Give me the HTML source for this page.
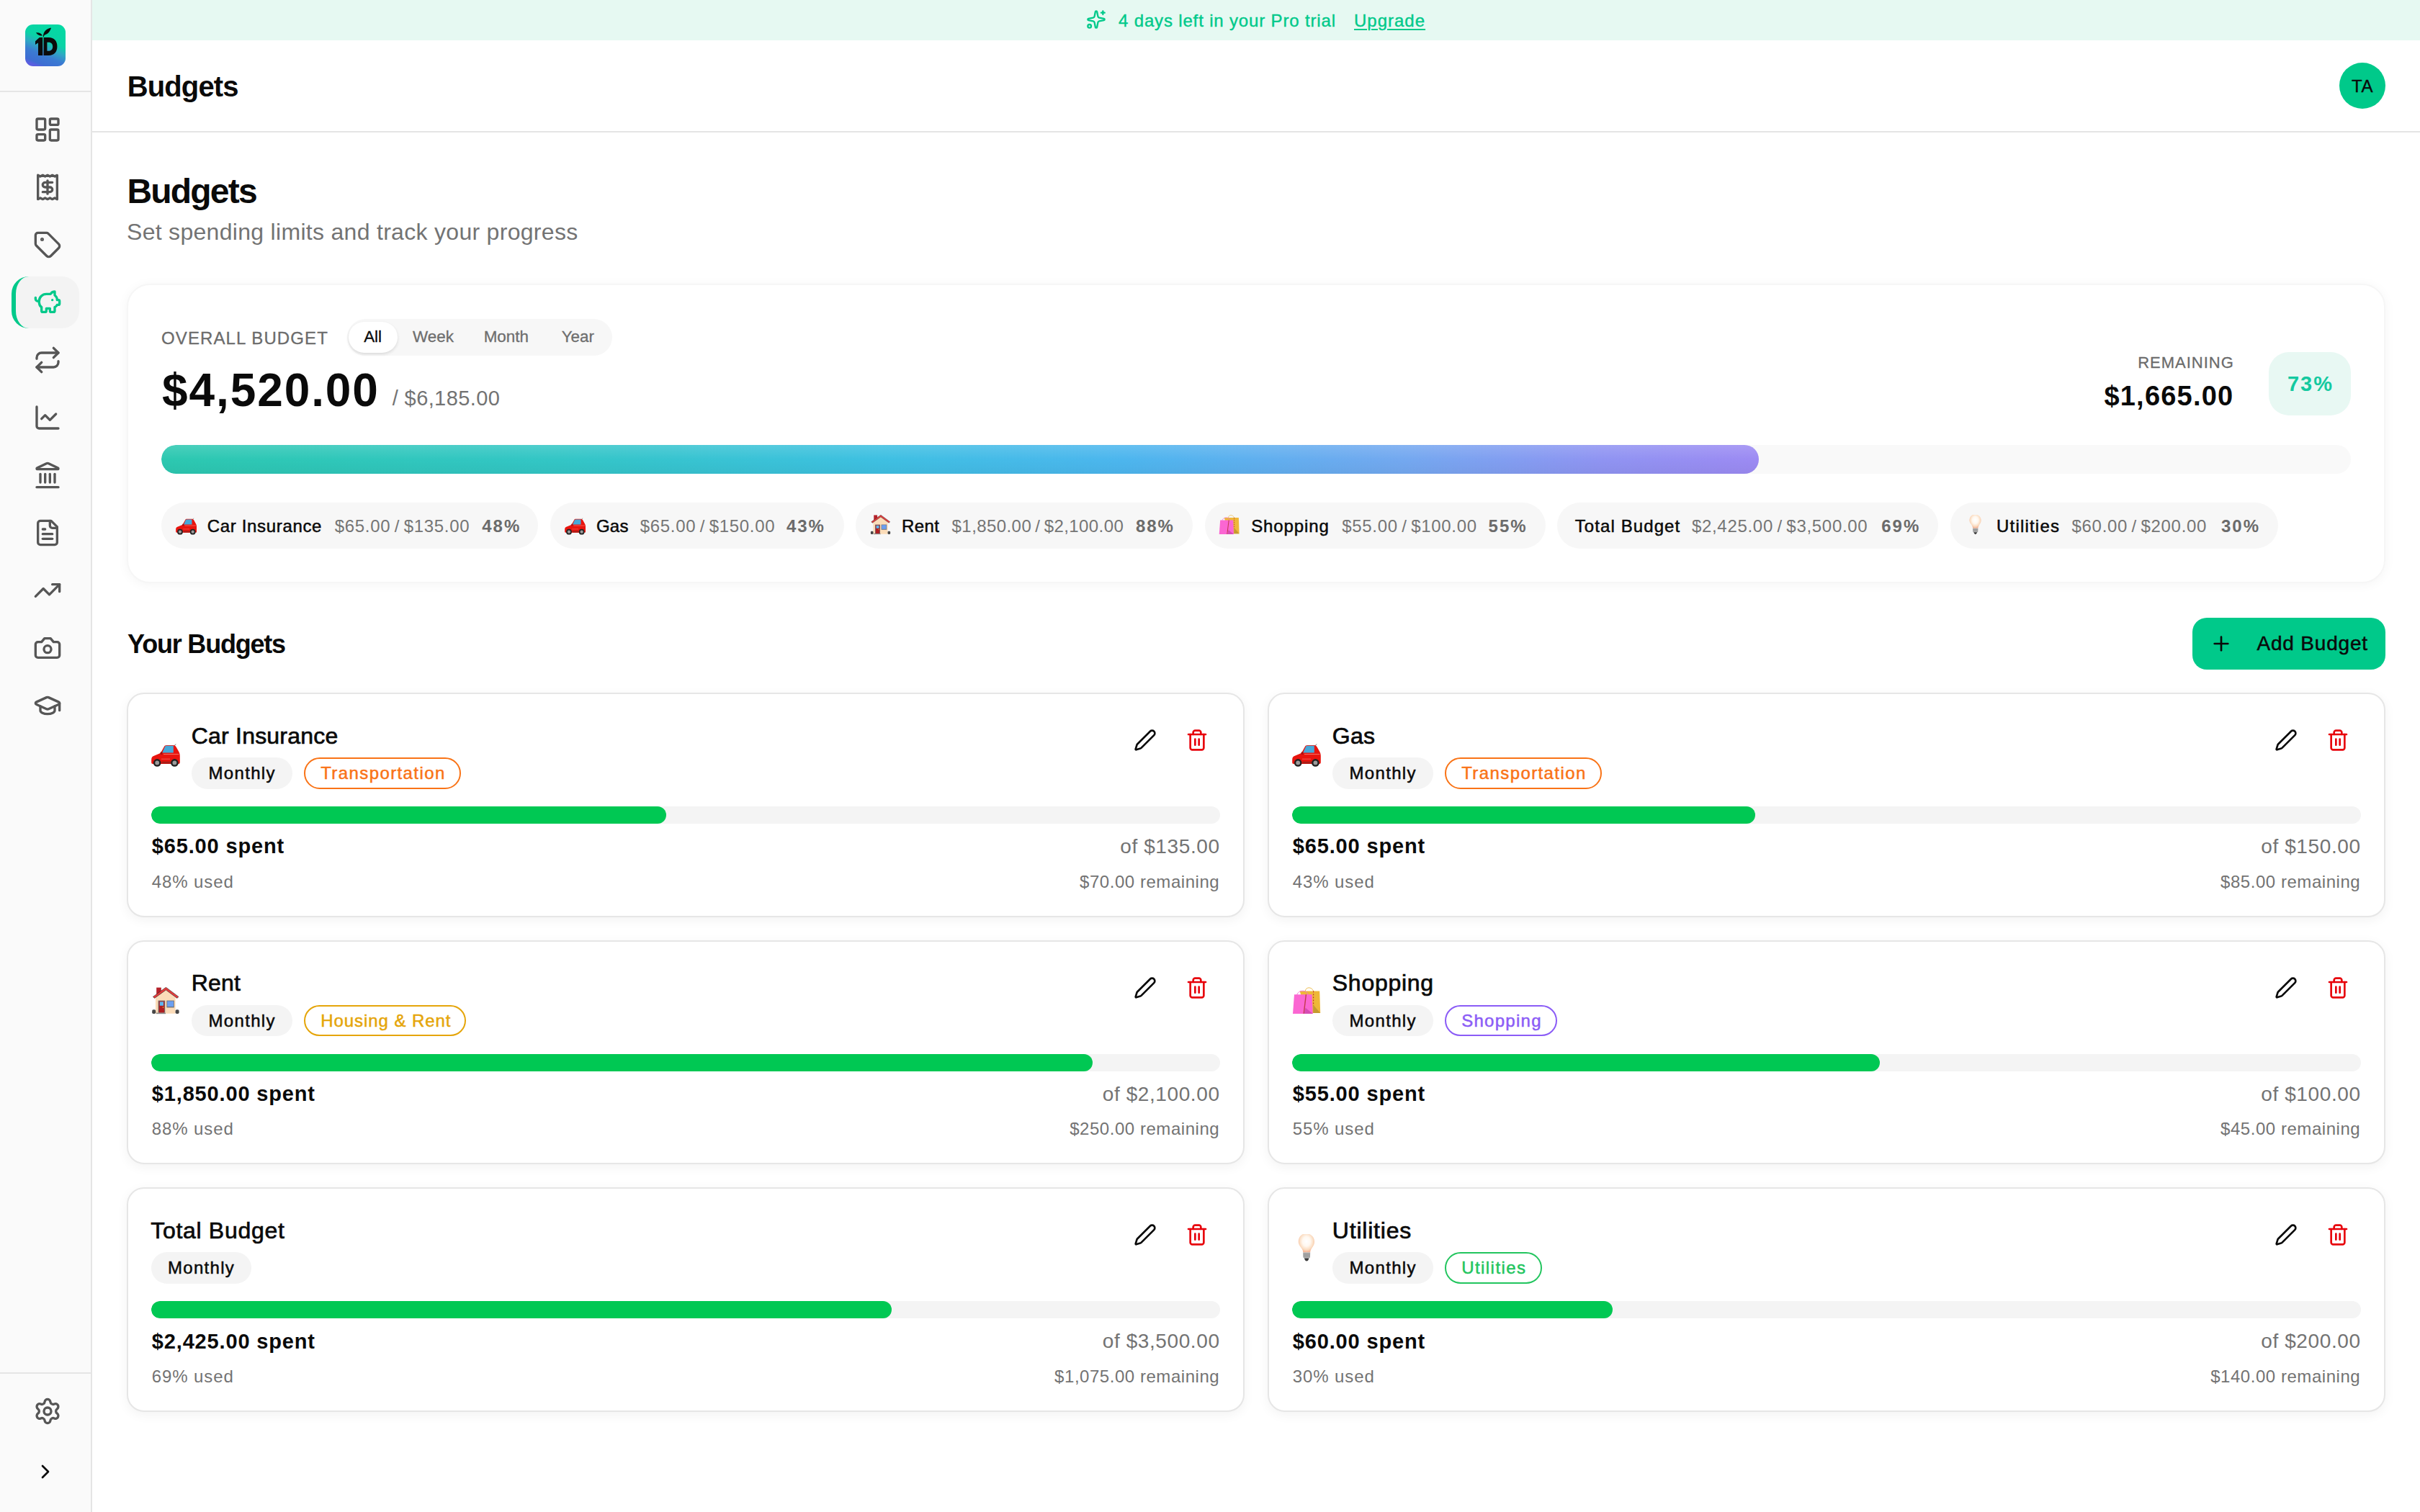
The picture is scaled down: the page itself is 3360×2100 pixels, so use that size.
<!DOCTYPE html>
<html>
<head>
<meta charset="utf-8">
<style>
@media (min-width:2500px){html{zoom:2}}
*{box-sizing:border-box;margin:0;padding:0}
body{width:1680px;height:1050px;overflow:hidden;background:#fff;font-family:"Liberation Sans",sans-serif;color:#0a0a0a;position:relative}
.abs{position:absolute}
.nw{white-space:nowrap}
/* sidebar */
#side{position:absolute;left:0;top:0;width:64px;height:1050px;background:#fafafa;border-right:1px solid #e5e5e5}
#side .top{position:absolute;left:0;top:0;width:63px;height:64px;border-bottom:1px solid #e5e5e5}
.nav{position:absolute;left:23px;width:20px;height:20px}
.nav svg{display:block;width:20px;height:20px;fill:none;stroke:#565656;stroke-width:2;stroke-linecap:round;stroke-linejoin:round}
#active{position:absolute;left:8px;top:192px;width:47px;height:36px;border-radius:12px;background:#f3f3f3;border-left:3px solid #00c98a}
#side .bot{position:absolute;left:0;top:953px;width:63px;height:1px;background:#e5e5e5}
/* banner */
#banner{position:absolute;left:64px;top:0;width:1616px;height:28px;background:#e6f9f2}
#header{position:absolute;left:64px;top:28px;width:1616px;height:64px;border-bottom:1px solid #e5e5e5;background:#fff}

.card{position:absolute;background:#fff;border-radius:12px}
#ov{left:88px;top:197px;width:1568px;height:208px;border:1px solid #f6f6f6;border-radius:16px;box-shadow:0 1px 8px rgba(0,0,0,0.045)}
.lbl{font-size:12px;line-height:12px;color:#6b6b6b;letter-spacing:0.55px;-webkit-text-stroke:0.15px #6b6b6b}
.seg{position:absolute;left:152px;top:23.5px;width:184px;height:25.5px;border-radius:13px;background:#f7f7f7}
.seg .pill{position:absolute;left:1px;top:2px;width:34px;height:21.5px;border-radius:11px;background:#fff;box-shadow:0 1px 2px rgba(0,0,0,0.12)}
.seg span{position:absolute;top:7px;font-size:11.2px;line-height:11.2px;color:#6e6e6e;white-space:nowrap;-webkit-text-stroke:0.15px currentColor}
.bar{position:absolute;left:23px;top:111px;width:1520px;height:20px;border-radius:10px;background:#f9f9f9;overflow:hidden}
.bar .fill{position:absolute;left:0;top:0;height:20px;width:1109px;border-radius:10px;background:linear-gradient(90deg,#2cc8b0 0%,#33c6c6 25%,#3ec0e2 45%,#4cb6ee 60%,#74a8f0 78%,#8f94f2 90%,#9c8af3 100%)}
.bar .fill:after{content:"";position:absolute;left:0;top:0;right:0;bottom:0;border-radius:10px;background:linear-gradient(180deg,rgba(255,255,255,0.14),rgba(255,255,255,0) 50%,rgba(0,0,0,0.04))}
.chips{position:absolute;left:23px;top:151px;height:32px}
.chip{position:absolute;top:0;height:32px;border-radius:16px;background:#f7f7f7}
.chip .t{position:absolute;top:10.4px;font-size:12px;line-height:12px;white-space:nowrap}
.chip .n{color:#0a0a0a;letter-spacing:0.33px;-webkit-text-stroke:0.25px #0a0a0a}
.chip .a{color:#757575;letter-spacing:0.35px}
.chip .p{color:#6b6b6b;font-weight:700;letter-spacing:1px}
.chip svg{position:absolute}

.bc{width:776px;height:155.8px;border:1px solid #e6e6e6;box-shadow:0 2px 8px rgba(0,0,0,0.05)}
.ttl{position:absolute;top:20.86px;font-size:16px;line-height:16px;white-space:nowrap;letter-spacing:0.1px;-webkit-text-stroke:0.35px #0a0a0a}
.pl{position:absolute;top:44px;height:21.8px;border-radius:11px;font-size:12px;line-height:12px;white-space:nowrap;padding:5.04px 0 0 11.6px;letter-spacing:0.65px}
.mo{width:69.8px;background:#f4f4f4;color:#0a0a0a;-webkit-text-stroke:0.25px #0a0a0a}
.ct{border:1px solid;padding:4.04px 0 0 10.6px;letter-spacing:0.7px;-webkit-text-stroke:0.25px currentColor}
.ib{position:absolute;top:24px;width:16px;height:16px}
.ib svg{display:block}
.trk{position:absolute;left:16px;top:78px;width:742px;height:12px;border-radius:6px;background:#f4f4f4;overflow:hidden}
.fl{height:12px;border-radius:6px;background:#00c853}
.sp{position:absolute;left:16.4px;top:98.7px;font-size:14.5px;line-height:14.5px;font-weight:700;letter-spacing:0.42px;white-space:nowrap}
.of{position:absolute;right:16.2px;top:99.15px;font-size:14px;line-height:14px;color:#737373;letter-spacing:0.3px;white-space:nowrap}
.us{position:absolute;left:16.4px;top:124.34px;font-size:12px;line-height:12px;color:#737373;letter-spacing:0.45px;white-space:nowrap}
.rm{position:absolute;right:16.4px;top:124.34px;font-size:12px;line-height:12px;color:#737373;letter-spacing:0.27px;white-space:nowrap}
</style>
</head>
<body>
<div id="side">
  <div class="top">
    <svg class="abs" style="left:17.5px;top:17px" width="28" height="29" viewBox="0 0 28 29">
      <defs>
        <linearGradient id="lg" x1="0.7" y1="0" x2="0.3" y2="1">
          <stop offset="0" stop-color="#04d9a3"/>
          <stop offset="0.38" stop-color="#0ad3a6"/>
          <stop offset="0.55" stop-color="#2fa8c4"/>
          <stop offset="0.72" stop-color="#3b7bd2"/>
          <stop offset="0.92" stop-color="#3d6dd3"/>
          <stop offset="1" stop-color="#5a5ee0"/>
        </linearGradient>
      </defs>
      <rect x="0" y="0" width="28" height="29" rx="5.5" fill="url(#lg)"/>
      <path d="M7 11.6 L9.9 9 L12.1 9 L12.1 21.5 L9 21.5 L9 12.8 L7 14 Z" fill="#0b0b0b"/>
      <path d="M12.8 9 L16.2 9 C20.2 9 22.2 11.6 22.2 15.25 C22.2 18.9 20.2 21.5 16.2 21.5 L12.8 21.5 Z M15.2 12.4 L15.2 18.4 L16.1 18.4 C18.2 18.4 19.1 17.1 19.1 15.4 C19.1 13.7 18.2 12.4 16.1 12.4 Z" fill="#0b0b0b" fill-rule="evenodd"/>
      <path d="M12.4 8.6 C12.5 5.6 14.2 3 18 2.3 C17.4 4.6 16 6.6 13.6 7.3 C13.1 7.7 12.9 8.1 12.9 8.6 Z" fill="#0b0b0b"/>
      <path d="M12.1 8 C11.5 6.3 9.8 5.4 7.5 5.6 C8.4 7.2 10 7.9 12 7.8 Z" fill="#0b0b0b"/>
    </svg>
  </div>
  <div id="active"></div>
  <!-- nav icons centers x=33, y=90+40k -->
  <div class="nav" style="top:80px"><svg viewBox="0 0 24 24"><rect width="7" height="9" x="3" y="3" rx="1"/><rect width="7" height="5" x="14" y="3" rx="1"/><rect width="7" height="9" x="14" y="12" rx="1"/><rect width="7" height="5" x="3" y="16" rx="1"/></svg></div>
  <div class="nav" style="top:120px"><svg viewBox="0 0 24 24"><path d="M4 2v20l2-1 2 1 2-1 2 1 2-1 2 1 2-1 2 1V2l-2 1-2-1-2 1-2-1-2 1-2-1-2 1Z"/><path d="M16 8h-6a2 2 0 1 0 0 4h4a2 2 0 1 1 0 4H8"/><path d="M12 17.5v-11"/></svg></div>
  <div class="nav" style="top:160px"><svg viewBox="0 0 24 24"><path d="M12.586 2.586A2 2 0 0 0 11.172 2H4a2 2 0 0 0-2 2v7.172a2 2 0 0 0 .586 1.414l8.704 8.704a2.426 2.426 0 0 0 3.42 0l6.58-6.58a2.426 2.426 0 0 0 0-3.42z"/><circle cx="7.5" cy="7.5" r=".5" fill="#565656"/></svg></div>
  <div class="nav" style="top:200px"><svg viewBox="0 0 24 24" style="stroke:#00c98a"><path d="M11 17h3v2a1 1 0 0 0 1 1h2a1 1 0 0 0 1-1v-3a3.16 3.16 0 0 0 2-2h1a1 1 0 0 0 1-1v-2a1 1 0 0 0-1-1h-1a5 5 0 0 0-2-4V3a4 4 0 0 0-3.2 1.6l-.3.4H11a6 6 0 0 0-6 6v1a5 5 0 0 0 2 4v3a1 1 0 0 0 1 1h2a1 1 0 0 0 1-1z"/><path d="M16 10h.01"/><path d="M2 8v1a2 2 0 0 0 2 2h1"/></svg></div>
  <div class="nav" style="top:240px"><svg viewBox="0 0 24 24"><path d="m17 2 4 4-4 4"/><path d="M3 11v-1a4 4 0 0 1 4-4h14"/><path d="m7 22-4-4 4-4"/><path d="M21 13v1a4 4 0 0 1-4 4H3"/></svg></div>
  <div class="nav" style="top:280px"><svg viewBox="0 0 24 24"><path d="M3 3v16a2 2 0 0 0 2 2h16"/><path d="m19 9-5 5-4-4-3 3"/></svg></div>
  <div class="nav" style="top:320px"><svg viewBox="0 0 24 24"><path d="M10 18v-7"/><path d="M11.12 2.198a2 2 0 0 1 1.76.006l7.866 3.847c.476.233.31.949-.22.949H3.474c-.53 0-.695-.716-.22-.949z"/><path d="M14 18v-7"/><path d="M18 18v-7"/><path d="M3 22h18"/><path d="M6 18v-7"/></svg></div>
  <div class="nav" style="top:360px"><svg viewBox="0 0 24 24"><path d="M15 2H6a2 2 0 0 0-2 2v16a2 2 0 0 0 2 2h12a2 2 0 0 0 2-2V7Z"/><path d="M14 2v4a2 2 0 0 0 2 2h4"/><path d="M10 9H8"/><path d="M16 13H8"/><path d="M16 17H8"/></svg></div>
  <div class="nav" style="top:400px"><svg viewBox="0 0 24 24"><polyline points="22 7 13.5 15.5 8.5 10.5 2 17"/><polyline points="16 7 22 7 22 13"/></svg></div>
  <div class="nav" style="top:440px"><svg viewBox="0 0 24 24"><path d="M14.5 4h-5L7 7H4a2 2 0 0 0-2 2v9a2 2 0 0 0 2 2h16a2 2 0 0 0 2-2V9a2 2 0 0 0-2-2h-3l-2.5-3z"/><circle cx="12" cy="13" r="3"/></svg></div>
  <div class="nav" style="top:480px"><svg viewBox="0 0 24 24"><path d="M21.42 10.922a1 1 0 0 0-.019-1.838L12.83 5.18a2 2 0 0 0-1.66 0L2.6 9.08a1 1 0 0 0 0 1.832l8.57 3.908a2 2 0 0 0 1.66 0z"/><path d="M22 10v6"/><path d="M6 12.5V16a6 3 0 0 0 12 0v-3.5"/></svg></div>
  <div class="bot"></div>
  <div class="nav" style="top:970px"><svg viewBox="0 0 24 24"><path d="M9.671 4.136a2.34 2.34 0 0 1 4.659 0 2.34 2.34 0 0 0 3.319 1.915 2.34 2.34 0 0 1 2.33 4.033 2.34 2.34 0 0 0 0 3.831 2.34 2.34 0 0 1-2.33 4.033 2.34 2.34 0 0 0-3.319 1.915 2.34 2.34 0 0 1-4.659 0 2.34 2.34 0 0 0-3.32-1.915 2.34 2.34 0 0 1-2.33-4.033 2.34 2.34 0 0 0 0-3.831A2.34 2.34 0 0 1 6.35 6.051a2.34 2.34 0 0 0 3.319-1.915"/><circle cx="12" cy="12" r="3"/></svg></div>
  <div class="nav" style="top:1014px;left:23.5px;width:16px;height:16px"><svg viewBox="0 0 24 24" style="stroke:#0a0a0a;width:16px;height:16px"><path d="m9 18 6-6-6-6"/></svg></div>
</div>

<div id="banner">
  <svg class="abs" style="left:689.8px;top:6.6px" width="14" height="14" viewBox="0 0 24 24" fill="none" stroke="#00c98a" stroke-width="2" stroke-linecap="round" stroke-linejoin="round"><path d="M11.017 2.814a1 1 0 0 1 1.966 0l1.051 5.558a2 2 0 0 0 1.594 1.594l5.558 1.051a1 1 0 0 1 0 1.966l-5.558 1.051a2 2 0 0 0-1.594 1.594l-1.051 5.558a1 1 0 0 1-1.966 0l-1.051-5.558a2 2 0 0 0-1.594-1.594l-5.558-1.051a1 1 0 0 1 0-1.966l5.558-1.051a2 2 0 0 0 1.594-1.594z"/><path d="M20 2v4"/><path d="M22 4h-4"/><circle cx="4" cy="20" r="2"/></svg>
  <div class="abs nw" style="left:712.5px;top:8.5px;font-size:12px;line-height:12px;color:#00c98a;letter-spacing:0.42px;-webkit-text-stroke:0.2px #00c98a">4 days left in your Pro trial</div>
  <div class="abs nw" style="left:876px;top:8.5px;font-size:12px;line-height:12px;color:#00c98a;letter-spacing:0.5px;-webkit-text-stroke:0.2px #00c98a;text-decoration:underline;text-underline-offset:1.5px">Upgrade</div>
</div>
<div id="header">
  <div class="abs nw" style="left:24.4px;top:22px;font-size:20px;line-height:20px;font-weight:700;letter-spacing:-0.45px">Budgets</div>
  <div class="abs" style="left:1560px;top:15.5px;width:32px;height:32px;border-radius:50%;background:#00c98a;font-size:12px;line-height:33px;text-align:center;letter-spacing:0.3px;-webkit-text-stroke:0.2px #0a0a0a">TA</div>
</div>

<!-- MAIN -->
<div class="abs nw" style="left:88.2px;top:121.2px;font-size:24px;line-height:24px;font-weight:700;letter-spacing:-0.9px">Budgets</div>
<div class="abs nw" style="left:88px;top:153px;font-size:16px;line-height:16px;color:#737373;letter-spacing:0.15px">Set spending limits and track your progress</div>

<div class="card" id="ov">
  <div class="abs nw lbl" style="left:23px;top:30.8px">OVERALL BUDGET</div>
  <div class="seg">
    <div class="pill"></div>
    <span style="left:11.6px;color:#0a0a0a">All</span>
    <span style="left:45.5px">Week</span>
    <span style="left:94.85px">Month</span>
    <span style="left:148.85px">Year</span>
  </div>
  <div class="abs nw" style="left:23.5px;top:56.9px;font-size:32px;line-height:32px;font-weight:700;letter-spacing:0.95px">$4,520.00</div>
  <div class="abs nw" style="left:183.35px;top:71.5px;font-size:14.5px;line-height:14.5px;color:#737373;letter-spacing:0.2px">/ $6,185.00</div>

  <div class="abs nw lbl" style="right:104.1px;top:48.7px;font-size:11px;line-height:11px;letter-spacing:0.5px;text-align:right;-webkit-text-stroke:0.15px #6b6b6b">REMAINING</div>
  <div class="abs nw" style="right:104.35px;top:67.6px;font-size:19px;line-height:19px;font-weight:700;letter-spacing:0.6px;text-align:right">$1,665.00</div>
  <div class="abs" style="left:1486.2px;top:46.5px;width:56.6px;height:43.8px;border-radius:14px;background:#e8f8f3;color:#14c9a0;font-weight:700;font-size:14.5px;line-height:44px;text-align:center;letter-spacing:1px;text-indent:1px">73%</div>

  <div class="bar"><div class="fill"></div></div>
  <div class="chips">
    <div class="chip" style="left:0px;width:261.65px"><svg viewBox="0 0 20 20" width="14.6" height="14.6" style="left:9.8px;top:8.3px"><path d="M16 4.5 L16.9 3.4" stroke="#444" stroke-width="0.4" stroke-linecap="round"/><path d="M0.1 14 C0.1 12.6 0.6 11.9 1.6 11.5 L5.8 9.7 L6.8 8.9 L9 4.9 C9.3 4.3 9.8 3.95 10.6 3.95 L15.4 4 C16.3 4 16.9 4.5 17.3 5.2 L19 8.3 C19.6 9.3 19.9 10.3 19.9 11.5 L19.9 16 C19.9 16.6 19.5 17 18.9 17 L1 17 C0.5 17 0.1 16.6 0.1 16 Z" fill="#e8140e"/><path d="M7.6 9.2 L9.4 5.2 C9.6 4.7 10 4.4 10.6 4.4 L15.4 4.4 L15.4 9.2 Z" fill="#46a8d8"/><rect x="6.4" y="8.7" width="1.3" height="1.7" fill="#a01010"/><path d="M8.5 10.3 L19.2 10.3" stroke="#ff9f8f" stroke-width="0.35"/><path d="M7 13.6 L13 13.6" stroke="#ff8f80" stroke-width="0.3"/><rect x="7.3" y="15.3" width="6.3" height="1.5" fill="#a81e18"/><circle cx="4.1" cy="16.2" r="2.65" fill="#232323"/><circle cx="4.1" cy="16.2" r="1.45" fill="#9c9c9c"/><circle cx="16.2" cy="16.2" r="2.65" fill="#232323"/><circle cx="16.2" cy="16.2" r="1.45" fill="#9c9c9c"/></svg><span class="t n" style="left:31.9px">Car Insurance</span><span class="t a" style="left:120.35px">$65.00&thinsp;/&thinsp;$135.00</span><span class="t p" style="left:222.6px">48%</span></div>
    <div class="chip" style="left:270px;width:204px"><svg viewBox="0 0 20 20" width="14.6" height="14.6" style="left:9.8px;top:8.3px"><path d="M16 4.5 L16.9 3.4" stroke="#444" stroke-width="0.4" stroke-linecap="round"/><path d="M0.1 14 C0.1 12.6 0.6 11.9 1.6 11.5 L5.8 9.7 L6.8 8.9 L9 4.9 C9.3 4.3 9.8 3.95 10.6 3.95 L15.4 4 C16.3 4 16.9 4.5 17.3 5.2 L19 8.3 C19.6 9.3 19.9 10.3 19.9 11.5 L19.9 16 C19.9 16.6 19.5 17 18.9 17 L1 17 C0.5 17 0.1 16.6 0.1 16 Z" fill="#e8140e"/><path d="M7.6 9.2 L9.4 5.2 C9.6 4.7 10 4.4 10.6 4.4 L15.4 4.4 L15.4 9.2 Z" fill="#46a8d8"/><rect x="6.4" y="8.7" width="1.3" height="1.7" fill="#a01010"/><path d="M8.5 10.3 L19.2 10.3" stroke="#ff9f8f" stroke-width="0.35"/><path d="M7 13.6 L13 13.6" stroke="#ff8f80" stroke-width="0.3"/><rect x="7.3" y="15.3" width="6.3" height="1.5" fill="#a81e18"/><circle cx="4.1" cy="16.2" r="2.65" fill="#232323"/><circle cx="4.1" cy="16.2" r="1.45" fill="#9c9c9c"/><circle cx="16.2" cy="16.2" r="2.65" fill="#232323"/><circle cx="16.2" cy="16.2" r="1.45" fill="#9c9c9c"/></svg><span class="t n" style="left:32.0px;letter-spacing:0.1px">Gas</span><span class="t a" style="left:62.35px">$65.00&thinsp;/&thinsp;$150.00</span><span class="t p" style="left:163.95px">43%</span></div>
    <div class="chip" style="left:482px;width:234px"><svg viewBox="0 0 20 20" width="14.6" height="14.6" style="left:9.8px;top:8.3px"><rect x="3.6" y="0.3" width="3.3" height="4.8" fill="#b5212a"/><path d="M3 7.2 L10.2 1.7 L16.8 7.2 L16.8 18.4 L3 18.4 Z" fill="#fbdcb9"/><path d="M1.2 6.7 L10.2 0.1 L19 6.7 L17.9 7.7 L10.2 2 L2.3 7.7 Z" fill="#e53b3b" stroke="#2c2c2c" stroke-width="0.3" stroke-linejoin="round"/><rect x="4.8" y="9.3" width="4.8" height="8.5" fill="#6f6f6f"/><rect x="5.3" y="9.8" width="3.8" height="8" fill="#b01e22"/><rect x="5.9" y="10.2" width="2.6" height="2.7" fill="#5ab8f2"/><rect x="7.9" y="13.7" width="0.7" height="0.7" fill="#e0b030"/><rect x="10.7" y="9.3" width="5.2" height="4.9" fill="#6b6b6b"/><rect x="11.1" y="9.7" width="4.4" height="3.9" fill="#6c9ff0"/><rect x="0.6" y="15.6" width="2.5" height="2.9" rx="0.9" fill="#474747"/><rect x="16.8" y="15.6" width="2.5" height="2.9" rx="0.9" fill="#474747"/><rect x="3.5" y="17.8" width="6.5" height="0.8" fill="#8a8a8a"/></svg><span class="t n" style="left:32.0px;letter-spacing:0.2px">Rent</span><span class="t a" style="left:66.8px;letter-spacing:0.21px">$1,850.00&thinsp;/&thinsp;$2,100.00</span><span class="t p" style="left:194.45px">88%</span></div>
    <div class="chip" style="left:724.45px;width:236.35px"><svg viewBox="0 0 20 20" width="14.6" height="14.6" style="left:9.8px;top:8.3px"><path d="M9 3 C9.6 -0.4 13.4 -0.4 14.9 2.8" stroke="#ebb53a" stroke-width="0.45" fill="none"/><path d="M5.3 2.7 L19.1 2.7 L19.6 18 L10 18 Z" fill="#eeb738"/><path d="M14.8 2.7 L14.8 13" stroke="#b8202a" stroke-width="0.55" stroke-dasharray="0.9 1.1"/><path d="M14.6 12.2 L19.6 18 L14.6 18 Z" fill="#c49a30"/><path d="M3.1 6.6 C3.3 2 9.6 1.2 11.2 5.2" stroke="#f26bd0" stroke-width="0.45" fill="none"/><path d="M1.5 5.1 L13.8 5.1 L14.4 18.5 L0.5 18.5 Z" fill="#fb66d2"/><path d="M9.7 5.1 L8.1 18.5" stroke="#c23a4a" stroke-width="0.7"/><path d="M9.3 14.4 L14.4 18.5 L8.2 18.5 Z" fill="#d64db4"/></svg><span class="t n" style="left:32.15px;letter-spacing:0.45px">Shopping</span><span class="t a" style="left:95.14999999999999px">$55.00&thinsp;/&thinsp;$100.00</span><span class="t p" style="left:196.85px">55%</span></div>
    <div class="chip" style="left:969px;width:264.7px"><span class="t n" style="left:12.35px;letter-spacing:0.55px">Total Budget</span><span class="t a" style="left:93.44999999999999px">$2,425.00&thinsp;/&thinsp;$3,500.00</span><span class="t p" style="left:225.1px">69%</span></div>
    <div class="chip" style="left:1242.1px;width:227.3px"><svg viewBox="0 0 20 20" width="14.6" height="14.6" style="left:9.8px;top:8.3px"><defs><radialGradient id="bgc5" cx="0.5" cy="0.42" r="0.55"><stop offset="0" stop-color="#ffffff"/><stop offset="0.45" stop-color="#fff8f0"/><stop offset="0.8" stop-color="#fbdcc0"/><stop offset="1" stop-color="#f5b596"/></radialGradient></defs><path d="M9.6 -0.5 C12.8 -0.5 15.5 2 15.5 5.2 C15.5 7.6 14 9.1 13.3 10.4 C12.8 11.3 12.6 12 12.6 12.8 L7.6 12.8 C7.6 12 7.4 11.3 6.9 10.4 C6.2 9.1 4.4 7.6 4.4 5.2 C4.4 2 6.8 -0.5 9.6 -0.5 Z" fill="url(#bgc5)"/><path d="M7.6 12.8 L12.6 12.8 L12.5 16 C12.4 16.6 12 16.8 11.6 16.8 L8.6 16.8 C8.2 16.8 7.8 16.6 7.7 16 Z" fill="#a9a9a9"/><path d="M7.7 14 L12.5 14 M7.7 15.2 L12.5 15.2" stroke="#8a8a8a" stroke-width="0.35"/><path d="M8.5 16.7 L11.7 16.7 Q11.3 18.7 10.1 18.7 Q8.9 18.7 8.5 16.7 Z" fill="#3a3a3a"/></svg><span class="t n" style="left:31.9px;letter-spacing:0.6px">Utilities</span><span class="t a" style="left:84.14999999999999px">$60.00&thinsp;/&thinsp;$200.00</span><span class="t p" style="left:187.9px">30%</span></div>
  </div>
</div>


<div class="abs nw" style="left:88.5px;top:438.3px;font-size:18px;line-height:18px;font-weight:700;letter-spacing:-0.6px">Your Budgets</div>
<div class="abs" style="left:1522px;top:429px;width:134px;height:36px;border-radius:10px;background:#00c98a">
  <svg class="abs" style="left:12px;top:9.85px" width="16" height="16" viewBox="0 0 24 24" fill="none" stroke="#0a0a0a" stroke-width="2" stroke-linecap="round"><path d="M5 12h14"/><path d="M12 5v14"/></svg>
  <div class="abs nw" style="left:44.75px;top:10.95px;font-size:14px;line-height:14px;letter-spacing:0.4px;-webkit-text-stroke:0.25px #0a0a0a">Add Budget</div>
</div>
<div class="card bc" style="left:88px;top:481px"><svg viewBox="0 0 20 20" width="20" height="20" style="position:absolute;left:16px;top:31.5px"><path d="M16 4.5 L16.9 3.4" stroke="#444" stroke-width="0.4" stroke-linecap="round"/><path d="M0.1 14 C0.1 12.6 0.6 11.9 1.6 11.5 L5.8 9.7 L6.8 8.9 L9 4.9 C9.3 4.3 9.8 3.95 10.6 3.95 L15.4 4 C16.3 4 16.9 4.5 17.3 5.2 L19 8.3 C19.6 9.3 19.9 10.3 19.9 11.5 L19.9 16 C19.9 16.6 19.5 17 18.9 17 L1 17 C0.5 17 0.1 16.6 0.1 16 Z" fill="#e8140e"/><path d="M7.6 9.2 L9.4 5.2 C9.6 4.7 10 4.4 10.6 4.4 L15.4 4.4 L15.4 9.2 Z" fill="#46a8d8"/><rect x="6.4" y="8.7" width="1.3" height="1.7" fill="#a01010"/><path d="M8.5 10.3 L19.2 10.3" stroke="#ff9f8f" stroke-width="0.35"/><path d="M7 13.6 L13 13.6" stroke="#ff8f80" stroke-width="0.3"/><rect x="7.3" y="15.3" width="6.3" height="1.5" fill="#a81e18"/><circle cx="4.1" cy="16.2" r="2.65" fill="#232323"/><circle cx="4.1" cy="16.2" r="1.45" fill="#9c9c9c"/><circle cx="16.2" cy="16.2" r="2.65" fill="#232323"/><circle cx="16.2" cy="16.2" r="1.45" fill="#9c9c9c"/></svg><div class="ttl" style="left:43.9px;letter-spacing:0.1px">Car Insurance</div><div class="pl mo" style="left:44.2px">Monthly</div><div class="pl ct" style="left:122.0px;width:109.2px;color:#f97316;border-color:#f97316;letter-spacing:0.7px">Transportation</div><div class="ib" style="left:698px"><svg viewBox="0 0 24 24" width="16" height="16" fill="none" stroke="#0a0a0a" stroke-width="2" stroke-linecap="round" stroke-linejoin="round"><path d="M21.174 6.812a1 1 0 0 0-3.986-3.987L3.842 16.174a2 2 0 0 0-.5.83l-1.321 4.352a.5.5 0 0 0 .623.622l4.353-1.32a2 2 0 0 0 .83-.497z"/></svg></div><div class="ib" style="left:734px"><svg viewBox="0 0 24 24" width="16" height="16" fill="none" stroke="#e7000b" stroke-width="2" stroke-linecap="round" stroke-linejoin="round"><path d="M3 6h18"/><path d="M19 6v14c0 1-1 2-2 2H7c-1 0-2-1-2-2V6"/><path d="M8 6V4c0-1 1-2 2-2h4c1 0 2 1 2 2v2"/><line x1="10" x2="10" y1="11" y2="17"/><line x1="14" x2="14" y1="11" y2="17"/></svg></div><div class="trk"><div class="fl" style="width:357.3px"></div></div><div class="sp">$65.00 spent</div><div class="of">of $135.00</div><div class="us">48% used</div><div class="rm">$70.00 remaining</div></div>
<div class="card bc" style="left:880px;top:481px"><svg viewBox="0 0 20 20" width="20" height="20" style="position:absolute;left:16px;top:31.5px"><path d="M16 4.5 L16.9 3.4" stroke="#444" stroke-width="0.4" stroke-linecap="round"/><path d="M0.1 14 C0.1 12.6 0.6 11.9 1.6 11.5 L5.8 9.7 L6.8 8.9 L9 4.9 C9.3 4.3 9.8 3.95 10.6 3.95 L15.4 4 C16.3 4 16.9 4.5 17.3 5.2 L19 8.3 C19.6 9.3 19.9 10.3 19.9 11.5 L19.9 16 C19.9 16.6 19.5 17 18.9 17 L1 17 C0.5 17 0.1 16.6 0.1 16 Z" fill="#e8140e"/><path d="M7.6 9.2 L9.4 5.2 C9.6 4.7 10 4.4 10.6 4.4 L15.4 4.4 L15.4 9.2 Z" fill="#46a8d8"/><rect x="6.4" y="8.7" width="1.3" height="1.7" fill="#a01010"/><path d="M8.5 10.3 L19.2 10.3" stroke="#ff9f8f" stroke-width="0.35"/><path d="M7 13.6 L13 13.6" stroke="#ff8f80" stroke-width="0.3"/><rect x="7.3" y="15.3" width="6.3" height="1.5" fill="#a81e18"/><circle cx="4.1" cy="16.2" r="2.65" fill="#232323"/><circle cx="4.1" cy="16.2" r="1.45" fill="#9c9c9c"/><circle cx="16.2" cy="16.2" r="2.65" fill="#232323"/><circle cx="16.2" cy="16.2" r="1.45" fill="#9c9c9c"/></svg><div class="ttl" style="left:43.9px;letter-spacing:0.1px">Gas</div><div class="pl mo" style="left:44.2px">Monthly</div><div class="pl ct" style="left:122.0px;width:109.2px;color:#f97316;border-color:#f97316;letter-spacing:0.7px">Transportation</div><div class="ib" style="left:698px"><svg viewBox="0 0 24 24" width="16" height="16" fill="none" stroke="#0a0a0a" stroke-width="2" stroke-linecap="round" stroke-linejoin="round"><path d="M21.174 6.812a1 1 0 0 0-3.986-3.987L3.842 16.174a2 2 0 0 0-.5.83l-1.321 4.352a.5.5 0 0 0 .623.622l4.353-1.32a2 2 0 0 0 .83-.497z"/></svg></div><div class="ib" style="left:734px"><svg viewBox="0 0 24 24" width="16" height="16" fill="none" stroke="#e7000b" stroke-width="2" stroke-linecap="round" stroke-linejoin="round"><path d="M3 6h18"/><path d="M19 6v14c0 1-1 2-2 2H7c-1 0-2-1-2-2V6"/><path d="M8 6V4c0-1 1-2 2-2h4c1 0 2 1 2 2v2"/><line x1="10" x2="10" y1="11" y2="17"/><line x1="14" x2="14" y1="11" y2="17"/></svg></div><div class="trk"><div class="fl" style="width:321.5px"></div></div><div class="sp">$65.00 spent</div><div class="of">of $150.00</div><div class="us">43% used</div><div class="rm">$85.00 remaining</div></div>
<div class="card bc" style="left:88px;top:652.8px"><svg viewBox="0 0 20 20" width="20" height="20" style="position:absolute;left:16px;top:31.5px"><rect x="3.6" y="0.3" width="3.3" height="4.8" fill="#b5212a"/><path d="M3 7.2 L10.2 1.7 L16.8 7.2 L16.8 18.4 L3 18.4 Z" fill="#fbdcb9"/><path d="M1.2 6.7 L10.2 0.1 L19 6.7 L17.9 7.7 L10.2 2 L2.3 7.7 Z" fill="#e53b3b" stroke="#2c2c2c" stroke-width="0.3" stroke-linejoin="round"/><rect x="4.8" y="9.3" width="4.8" height="8.5" fill="#6f6f6f"/><rect x="5.3" y="9.8" width="3.8" height="8" fill="#b01e22"/><rect x="5.9" y="10.2" width="2.6" height="2.7" fill="#5ab8f2"/><rect x="7.9" y="13.7" width="0.7" height="0.7" fill="#e0b030"/><rect x="10.7" y="9.3" width="5.2" height="4.9" fill="#6b6b6b"/><rect x="11.1" y="9.7" width="4.4" height="3.9" fill="#6c9ff0"/><rect x="0.6" y="15.6" width="2.5" height="2.9" rx="0.9" fill="#474747"/><rect x="16.8" y="15.6" width="2.5" height="2.9" rx="0.9" fill="#474747"/><rect x="3.5" y="17.8" width="6.5" height="0.8" fill="#8a8a8a"/></svg><div class="ttl" style="left:43.9px;letter-spacing:0.1px">Rent</div><div class="pl mo" style="left:44.2px">Monthly</div><div class="pl ct" style="left:122.0px;width:112.4px;color:#e5a50a;border-color:#e5a50a;letter-spacing:0.47px">Housing &amp; Rent</div><div class="ib" style="left:698px"><svg viewBox="0 0 24 24" width="16" height="16" fill="none" stroke="#0a0a0a" stroke-width="2" stroke-linecap="round" stroke-linejoin="round"><path d="M21.174 6.812a1 1 0 0 0-3.986-3.987L3.842 16.174a2 2 0 0 0-.5.83l-1.321 4.352a.5.5 0 0 0 .623.622l4.353-1.32a2 2 0 0 0 .83-.497z"/></svg></div><div class="ib" style="left:734px"><svg viewBox="0 0 24 24" width="16" height="16" fill="none" stroke="#e7000b" stroke-width="2" stroke-linecap="round" stroke-linejoin="round"><path d="M3 6h18"/><path d="M19 6v14c0 1-1 2-2 2H7c-1 0-2-1-2-2V6"/><path d="M8 6V4c0-1 1-2 2-2h4c1 0 2 1 2 2v2"/><line x1="10" x2="10" y1="11" y2="17"/><line x1="14" x2="14" y1="11" y2="17"/></svg></div><div class="trk"><div class="fl" style="width:653.7px"></div></div><div class="sp">$1,850.00 spent</div><div class="of">of $2,100.00</div><div class="us">88% used</div><div class="rm">$250.00 remaining</div></div>
<div class="card bc" style="left:880px;top:652.8px"><svg viewBox="0 0 20 20" width="20" height="20" style="position:absolute;left:16px;top:31.5px"><path d="M9 3 C9.6 -0.4 13.4 -0.4 14.9 2.8" stroke="#ebb53a" stroke-width="0.45" fill="none"/><path d="M5.3 2.7 L19.1 2.7 L19.6 18 L10 18 Z" fill="#eeb738"/><path d="M14.8 2.7 L14.8 13" stroke="#b8202a" stroke-width="0.55" stroke-dasharray="0.9 1.1"/><path d="M14.6 12.2 L19.6 18 L14.6 18 Z" fill="#c49a30"/><path d="M3.1 6.6 C3.3 2 9.6 1.2 11.2 5.2" stroke="#f26bd0" stroke-width="0.45" fill="none"/><path d="M1.5 5.1 L13.8 5.1 L14.4 18.5 L0.5 18.5 Z" fill="#fb66d2"/><path d="M9.7 5.1 L8.1 18.5" stroke="#c23a4a" stroke-width="0.7"/><path d="M9.3 14.4 L14.4 18.5 L8.2 18.5 Z" fill="#d64db4"/></svg><div class="ttl" style="left:43.9px;letter-spacing:0.36px">Shopping</div><div class="pl mo" style="left:44.2px">Monthly</div><div class="pl ct" style="left:122.0px;width:77.8px;color:#8b5cf6;border-color:#8b5cf6;letter-spacing:0.64px">Shopping</div><div class="ib" style="left:698px"><svg viewBox="0 0 24 24" width="16" height="16" fill="none" stroke="#0a0a0a" stroke-width="2" stroke-linecap="round" stroke-linejoin="round"><path d="M21.174 6.812a1 1 0 0 0-3.986-3.987L3.842 16.174a2 2 0 0 0-.5.83l-1.321 4.352a.5.5 0 0 0 .623.622l4.353-1.32a2 2 0 0 0 .83-.497z"/></svg></div><div class="ib" style="left:734px"><svg viewBox="0 0 24 24" width="16" height="16" fill="none" stroke="#e7000b" stroke-width="2" stroke-linecap="round" stroke-linejoin="round"><path d="M3 6h18"/><path d="M19 6v14c0 1-1 2-2 2H7c-1 0-2-1-2-2V6"/><path d="M8 6V4c0-1 1-2 2-2h4c1 0 2 1 2 2v2"/><line x1="10" x2="10" y1="11" y2="17"/><line x1="14" x2="14" y1="11" y2="17"/></svg></div><div class="trk"><div class="fl" style="width:408.1px"></div></div><div class="sp">$55.00 spent</div><div class="of">of $100.00</div><div class="us">55% used</div><div class="rm">$45.00 remaining</div></div>
<div class="card bc" style="left:88px;top:824.6px"><div class="ttl" style="left:15.6px;letter-spacing:0.35px">Total Budget</div><div class="pl mo" style="left:15.9px">Monthly</div><div class="ib" style="left:698px"><svg viewBox="0 0 24 24" width="16" height="16" fill="none" stroke="#0a0a0a" stroke-width="2" stroke-linecap="round" stroke-linejoin="round"><path d="M21.174 6.812a1 1 0 0 0-3.986-3.987L3.842 16.174a2 2 0 0 0-.5.83l-1.321 4.352a.5.5 0 0 0 .623.622l4.353-1.32a2 2 0 0 0 .83-.497z"/></svg></div><div class="ib" style="left:734px"><svg viewBox="0 0 24 24" width="16" height="16" fill="none" stroke="#e7000b" stroke-width="2" stroke-linecap="round" stroke-linejoin="round"><path d="M3 6h18"/><path d="M19 6v14c0 1-1 2-2 2H7c-1 0-2-1-2-2V6"/><path d="M8 6V4c0-1 1-2 2-2h4c1 0 2 1 2 2v2"/><line x1="10" x2="10" y1="11" y2="17"/><line x1="14" x2="14" y1="11" y2="17"/></svg></div><div class="trk"><div class="fl" style="width:514.1px"></div></div><div class="sp">$2,425.00 spent</div><div class="of">of $3,500.00</div><div class="us">69% used</div><div class="rm">$1,075.00 remaining</div></div>
<div class="card bc" style="left:880px;top:824.6px"><svg viewBox="0 0 20 20" width="20" height="20" style="position:absolute;left:16px;top:31.5px"><defs><radialGradient id="bgk5" cx="0.5" cy="0.42" r="0.55"><stop offset="0" stop-color="#ffffff"/><stop offset="0.45" stop-color="#fff8f0"/><stop offset="0.8" stop-color="#fbdcc0"/><stop offset="1" stop-color="#f5b596"/></radialGradient></defs><path d="M9.6 -0.5 C12.8 -0.5 15.5 2 15.5 5.2 C15.5 7.6 14 9.1 13.3 10.4 C12.8 11.3 12.6 12 12.6 12.8 L7.6 12.8 C7.6 12 7.4 11.3 6.9 10.4 C6.2 9.1 4.4 7.6 4.4 5.2 C4.4 2 6.8 -0.5 9.6 -0.5 Z" fill="url(#bgk5)"/><path d="M7.6 12.8 L12.6 12.8 L12.5 16 C12.4 16.6 12 16.8 11.6 16.8 L8.6 16.8 C8.2 16.8 7.8 16.6 7.7 16 Z" fill="#a9a9a9"/><path d="M7.7 14 L12.5 14 M7.7 15.2 L12.5 15.2" stroke="#8a8a8a" stroke-width="0.35"/><path d="M8.5 16.7 L11.7 16.7 Q11.3 18.7 10.1 18.7 Q8.9 18.7 8.5 16.7 Z" fill="#3a3a3a"/></svg><div class="ttl" style="left:43.9px;letter-spacing:0.4px">Utilities</div><div class="pl mo" style="left:44.2px">Monthly</div><div class="pl ct" style="left:122.0px;width:67.25px;color:#22c55e;border-color:#22c55e;letter-spacing:0.72px">Utilities</div><div class="ib" style="left:698px"><svg viewBox="0 0 24 24" width="16" height="16" fill="none" stroke="#0a0a0a" stroke-width="2" stroke-linecap="round" stroke-linejoin="round"><path d="M21.174 6.812a1 1 0 0 0-3.986-3.987L3.842 16.174a2 2 0 0 0-.5.83l-1.321 4.352a.5.5 0 0 0 .623.622l4.353-1.32a2 2 0 0 0 .83-.497z"/></svg></div><div class="ib" style="left:734px"><svg viewBox="0 0 24 24" width="16" height="16" fill="none" stroke="#e7000b" stroke-width="2" stroke-linecap="round" stroke-linejoin="round"><path d="M3 6h18"/><path d="M19 6v14c0 1-1 2-2 2H7c-1 0-2-1-2-2V6"/><path d="M8 6V4c0-1 1-2 2-2h4c1 0 2 1 2 2v2"/><line x1="10" x2="10" y1="11" y2="17"/><line x1="14" x2="14" y1="11" y2="17"/></svg></div><div class="trk"><div class="fl" style="width:222.6px"></div></div><div class="sp">$60.00 spent</div><div class="of">of $200.00</div><div class="us">30% used</div><div class="rm">$140.00 remaining</div></div>
</body>
</html>
